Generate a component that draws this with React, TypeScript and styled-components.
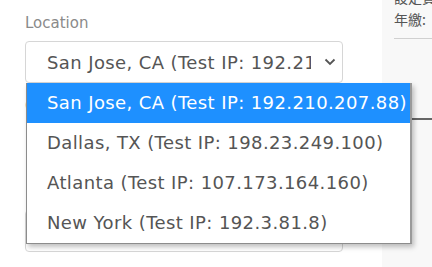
import React from 'react';
import styled, { createGlobalStyle } from 'styled-components';

const GlobalStyle = createGlobalStyle`
	html, body {
		margin: 0;
		padding: 0;
		background: #fff;
		overflow: hidden;
	}
	body {
		font-family: 'DejaVu Sans', Verdana, sans-serif;
	}
`;

const Page = styled.div`
	display: flex;
	width: 432px;
	height: 267px;
	overflow: hidden;
`;

const FormColumn = styled.div`
	position: relative;
	width: 357px;
	padding-left: 25px;
	display: flex;
	flex-direction: column;
`;

const Label = styled.div`
	font-size: 15px;
	line-height: 18px;
	color: #8a8a8a;
	margin-top: 14px;
	margin-bottom: 9px;
`;

const SelectBox = styled.div<{ $top?: number }>`
	box-sizing: border-box;
	width: 318px;
	height: 42px;
	border: 1px solid #d6d6d6;
	border-radius: 4px;
	background: #fff;
	display: flex;
	align-items: center;
	padding: 0 6px 0 21px;
	margin-top: ${(p) => p.$top || 0}px;
	color: #555;
	font-size: 18px;
	letter-spacing: 0.4px;
	span {
		flex: 1;
		white-space: nowrap;
		overflow: hidden;
		margin-right: 13px;
	}
	svg {
		flex: none;
	}
`;

const Dropdown = styled.ul`
	position: absolute;
	top: 83px;
	left: 26px;
	width: 386px;
	box-sizing: border-box;
	margin: 0;
	padding: 0;
	list-style: none;
	background: #fff;
	border: 1px solid #8c8c8c;
	border-top: none;
	border-right: 2px solid #9a9a9a;
	box-shadow: 2px 3px 5px rgba(0, 0, 0, 0.25);
	z-index: 2;
`;

const Option = styled.li<{ $active?: boolean }>`
	height: 40px;
	line-height: 40px;
	padding-left: 20px;
	font-size: 18px;
	letter-spacing: 0.4px;
	white-space: nowrap;
	color: ${(p) => (p.$active ? '#fff' : '#555')};
	background: ${(p) => (p.$active ? '#1e90ff' : '#fff')};
`;

const SidePanel = styled.div`
	flex: 1;
	background: #f8f8f8;
	padding-left: 12px;
	font-family: 'Noto Sans CJK TC', 'Noto Sans', sans-serif;
	font-size: 14px;
	color: #555;
	overflow: hidden;
`;

const SideLines = styled.div`
	margin-top: -14px;
	line-height: 22px;
	white-space: nowrap;
`;

const Divider = styled.div<{ $dark?: boolean; $gap: number }>`
	margin-top: ${(p) => p.$gap}px;
	height: ${(p) => (p.$dark ? 2 : 1)}px;
	background: ${(p) => (p.$dark ? '#666' : '#d0d0d0')};
`;

const Chevron = () => (
	<svg width="12" height="8" viewBox="0 0 12 8">
		<path d="M1.5 1.5 L6 6 L10.5 1.5" fill="none" stroke="#555" strokeWidth="1.8" />
	</svg>
);

const options = [
	'San Jose, CA (Test IP: 192.210.207.88)',
	'Dallas, TX (Test IP: 198.23.249.100)',
	'Atlanta (Test IP: 107.173.164.160)',
	'New York (Test IP: 192.3.81.8)',
];

const App = () => {
	return (
		<Page>
			<GlobalStyle />
			<FormColumn>
				<Label>Location</Label>
				<SelectBox>
					<span>{options[0]}</span>
					<Chevron />
				</SelectBox>
				<Label>Operating System</Label>
				<SelectBox $top={86}>
					<span>None</span>
					<Chevron />
				</SelectBox>
				<Dropdown>
					{options.map((o, i) => (
						<Option key={o} $active={i === 0}>
							{o}
						</Option>
					))}
				</Dropdown>
			</FormColumn>
			<SidePanel>
				<SideLines>
					<div>設定費用說明</div>
					<div>年繳:</div>
				</SideLines>
				<Divider $gap={8} />
				<Divider $dark $gap={79} />
			</SidePanel>
		</Page>
	);
};

export default App;
